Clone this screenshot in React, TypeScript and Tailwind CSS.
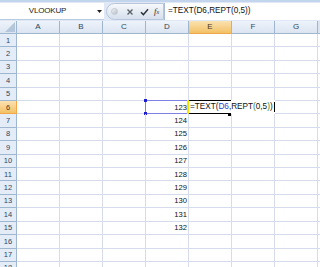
import React from "react";

const COLS = ["A", "B", "C", "D", "E", "F", "G"];
const ROWS = Array.from({ length: 18 }, (_, i) => i + 1);

function Corner() {
  return (
    <div className="w-[17px] h-full bg-gradient-to-b from-[#eef3fa] to-[#dbe5f2] border-r border-b border-[#9eb6ce] flex items-end justify-end p-[1px]">
      <svg width="10" height="10" viewBox="0 0 10 10">
        <polygon points="10,0 10,10 0,10" fill="#b4c6dc" />
      </svg>
    </div>
  );
}

export default function App() {
  return (
    <div className="w-[320px] h-[267px] overflow-hidden bg-white font-['Liberation_Sans',Arial,sans-serif] text-[8px] text-[#111]">
      {/* formula bar */}
      <div className="h-[21px] bg-[#dfe8f4] flex flex-col">
        <div className="h-[2px] bg-[#c3d5ec]" />
        <div className="h-[1px]" />
        <div className="h-[17px] flex items-stretch">
          <div className="w-[104px] bg-white border-b border-[#b9cbe1] flex items-center">
            <div className="w-[95px] text-center text-[8px] tracking-[-0.2px] text-[#222]">VLOOKUP</div>
            <div className="w-[9px] flex items-center justify-center">
              <svg width="5" height="3" viewBox="0 0 5 3">
                <polygon points="0,0 5,0 2.5,3" fill="#222" />
              </svg>
            </div>
          </div>
          <div className="w-[2px]" />
          <div className="w-[58px] rounded-l-full bg-gradient-to-b from-[#f6f8fb] to-[#d6e0ec] border border-[#b6c7dc] flex items-center">
            <div className="w-[4px]" />
            <div className="w-[7px] h-[7px] rounded-full bg-gradient-to-br from-[#f2f4f6] to-[#b5bcc6] border border-[#c4cad2]" />
            <div className="w-[8px]" />
            <svg width="8" height="8" viewBox="0 0 8 8">
              <path d="M1.5 1.5 L6.5 6.5 M6.5 1.5 L1.5 6.5" stroke="#5b6068" strokeWidth="1.4" />
            </svg>
            <div className="w-[6px]" />
            <svg width="9" height="8" viewBox="0 0 9 8">
              <path d="M1 4.2 L3.4 6.6 L8 1.2" stroke="#2a2f36" strokeWidth="1.4" fill="none" />
            </svg>
            <div className="w-[5px]" />
            <div className="font-['Liberation_Serif',serif] italic text-[9px] text-[#333] leading-none">
              f<span className="text-[6px]">x</span>
            </div>
          </div>
          <div className="flex-1 bg-white border-l border-[#a9bdd7] flex items-center pl-[3px] text-[8.2px] text-[#111] whitespace-nowrap">
            =TEXT(D6,REPT(0,5))
          </div>
        </div>
        <div className="h-[1px]" />
      </div>

      {/* column headers */}
      <div className="h-[13px] flex">
        <Corner />
        {COLS.map((c) => (
          <div
            key={c}
            className={
              c === "E"
                ? "w-[43px] h-full flex items-center justify-center bg-gradient-to-b from-[#fbe2b1] to-[#f2c163] border-r border-b border-[#f2a84a] text-[#4a3a20]"
                : "w-[43px] h-full flex items-center justify-center bg-gradient-to-b from-[#eef3fa] to-[#dbe5f2] border-r border-b border-[#9eb6ce] text-[#2f4663]"
            }
          >
            {c}
          </div>
        ))}
        <div className="flex-1 bg-[#dbe5f2] border-b border-[#9eb6ce]" />
      </div>

      {/* rows */}
      {ROWS.map((r) => (
        <div key={r} className="h-[13.42px] flex">
          <div
            className={
              r === 6
                ? "w-[17px] h-full flex items-center justify-center bg-gradient-to-b from-[#fbe2b1] to-[#f2c163] border-r border-b border-[#f2a84a] text-[#4a3a20] text-[7.5px]"
                : "w-[17px] h-full flex items-center justify-center bg-[#e4ecf7] border-r border-b border-[#9eb6ce] text-[#2f4663] text-[7.5px]"
            }
          >
            {r}
          </div>
          {COLS.map((c) => {
            const val = c === "D" && r >= 6 && r <= 15 ? String(117 + r) : "";
            return (
              <div
                key={c}
                className="relative w-[43px] h-full border-r border-b border-[#d6dceb] flex items-center justify-end pr-[1px] text-[7.6px] text-[#111]"
              >
                {val}
                {c === "D" && r === 6 && (
                  <div className="absolute left-[-1px] top-[-1px] w-[43px] h-[14px] border border-[#7f7fe6]">
                    <div className="absolute left-[-2px] top-[-2px] w-[3px] h-[3px] bg-[#2020d0]" />
                    <div className="absolute left-[-2px] bottom-[-2px] w-[3px] h-[3px] bg-[#2020d0]" />
                  </div>
                )}
                {c === "E" && r === 6 && (
                  <div className="absolute left-[-2px] top-[-1px] h-[14px] w-[88px] z-10 bg-white flex items-center">
                    <div className="w-[2px] h-full bg-[#f5e400]" />
                    <div className="absolute left-[2px] top-0 w-[42px] h-[1px] bg-black" />
                    <div className="absolute left-[2px] bottom-0 w-[41px] h-[1px] bg-black" />
                    <div className="absolute left-[41px] bottom-[-2px] w-[3px] h-[3px] bg-black" />
                    <div className="pl-[1px] text-[8.2px] whitespace-nowrap text-[#111] flex items-center">
                      <span>=TEXT(</span>
                      <span className="text-[#2a3fd0]">D6</span>
                      <span>,REPT</span>
                      <span className="text-[#2e7d32]">(</span>
                      <span>0,5</span>
                      <span className="text-[#2e7d32]">)</span>
                      <span>)</span>
                      <span className="ml-[1px] w-[1px] h-[10px] bg-black" />
                    </div>
                  </div>
                )}
              </div>
            );
          })}
          <div className="flex-1 h-full border-b border-[#d6dceb]" />
        </div>
      ))}
    </div>
  );
}
